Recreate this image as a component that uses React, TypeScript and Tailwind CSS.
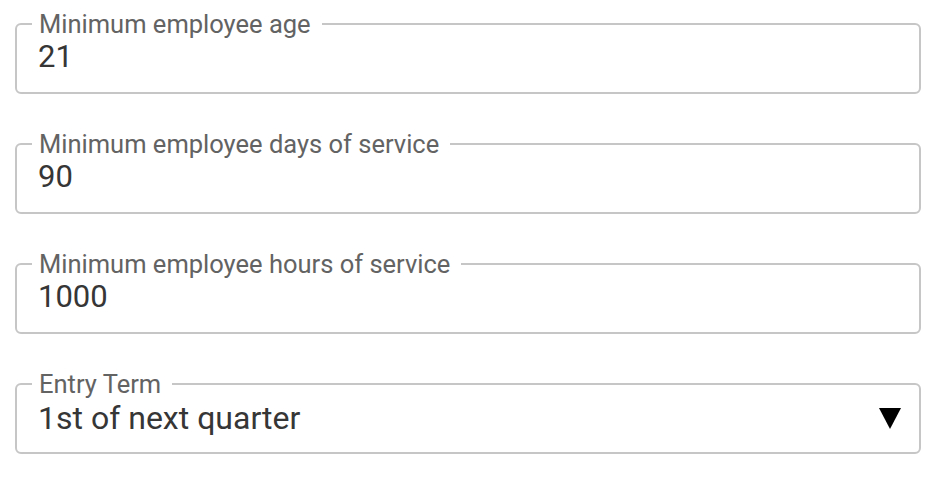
import { ReactNode } from "react";

function Campo({ label, children }: { label: string; children: ReactNode }) {
  return (
    <fieldset className="border-2 border-[#c6c6c6] rounded-[6px] pl-[15px] pr-[17px] w-[906px] h-[85px]">
      <legend className="pl-[7px] pr-[11px] text-[25.5px] leading-[30px] text-[#636363]">{label}</legend>
      {children}
    </fieldset>
  );
}

export default function App() {
  return (
    <div className="pl-[15px] pt-[9px] flex flex-col gap-[35px] font-['Roboto',sans-serif] bg-white h-[480px]">
      <Campo label="Minimum employee age">
        <div className="mt-[2px] pl-[6px] text-[31px] leading-[32px] text-[#363636]">21</div>
      </Campo>
      <Campo label="Minimum employee days of service">
        <div className="mt-[2px] pl-[6px] text-[31px] leading-[32px] text-[#363636]">90</div>
      </Campo>
      <Campo label="Minimum employee hours of service">
        <div className="mt-[2px] pl-[6px] text-[31px] leading-[32px] text-[#363636]">1000</div>
      </Campo>
      <Campo label="Entry Term">
        <div className="mt-[3px] pl-[6px] h-[32px] flex items-center justify-between text-[32px] leading-[32px] text-[#363636]">
          <span>1st of next quarter</span>
          <svg width="22" height="21" viewBox="0 0 22 21" className="mr-[1px]">
            <polygon points="0,0 22,0 11,21" fill="#000000" />
          </svg>
        </div>
      </Campo>
    </div>
  );
}
